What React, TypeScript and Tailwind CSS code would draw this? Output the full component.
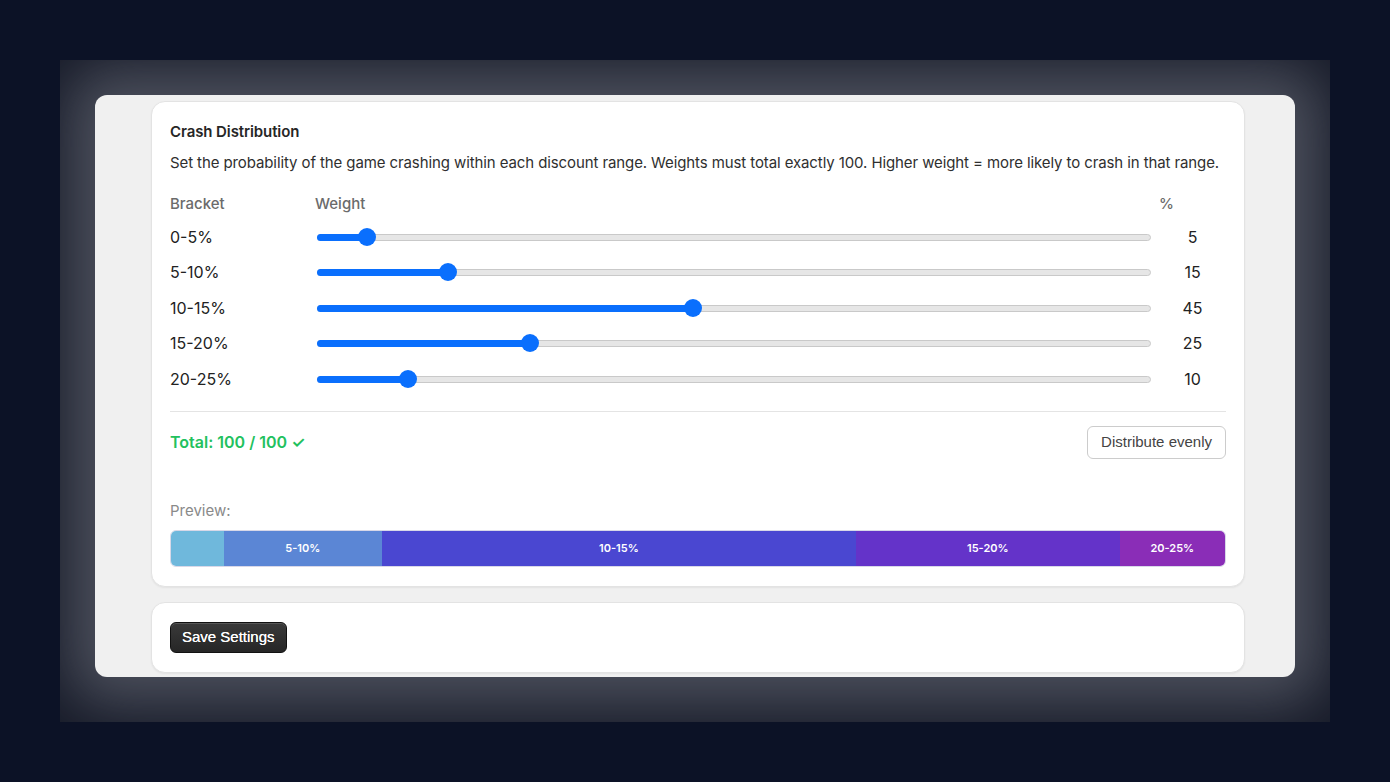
import React from "react";

const brackets = [
  { label: "0-5%", value: 5, color: "#6fb8dc" },
  { label: "5-10%", value: 15, color: "#5b86d5" },
  { label: "10-15%", value: 45, color: "#4a47d1" },
  { label: "15-20%", value: 25, color: "#6433c9" },
  { label: "20-25%", value: 10, color: "#8a2db7" },
];

const Slider = ({ value }: { value: number }) => {
  return (
    <div className="relative ml-[2px] mr-[8px] h-[18px]">
      <div className="absolute left-0 right-0 top-[6px] h-[7px] rounded-full border border-[#c9c9c9] bg-[#e6e6e6]" />
      <div
        className="absolute left-0 top-[6px] h-[7px] rounded-full bg-[#0a6ffd]"
        style={{ width: `calc(9px + (100% - 18px) * ${value / 100})` }}
      />
      <div
        className="absolute top-0 h-[18px] w-[18px] rounded-full bg-[#0a6ffd]"
        style={{ left: `calc((100% - 18px) * ${value / 100})` }}
      />
    </div>
  );
};

export default function App() {
  const total = brackets.reduce((s, b) => s + b.value, 0);
  return (
    <div className="h-[782px] w-full bg-[#0c1226] p-[60px] font-['Inter',sans-serif]">
      <div className="h-[662px] w-[1270px] overflow-hidden bg-[#171b29] px-[35px] pt-[35px]">
        <div className="h-[582px] overflow-hidden rounded-[12px] bg-[#f0f0f0] pl-[56px] pr-[50px] pt-[6px] shadow-[0_0_60px_28px_rgba(120,124,134,0.55)]">
          <div className="rounded-[14px] border border-[#e3e3e3] bg-white px-[18px] pb-[19px] pt-[19px] shadow-[0_1px_2px_rgba(0,0,0,0.06)]">
            <h2 className="text-[15px] font-semibold leading-[22px] tracking-[-0.1px] text-[#262626]">
              Crash Distribution
            </h2>
            <p className="mt-[9px] whitespace-nowrap text-[15px] leading-[22px] tracking-[-0.1px] text-[#2f2f2f]">
              Set the probability of the game crashing within each discount range. Weights must total
              exactly 100. Higher weight = more likely to crash in that range.
            </p>
            <div className="mt-[19px] grid grid-cols-[145px_1fr_67px] text-[15px] font-medium leading-[22px] text-[#6b6b6b]">
              <div>Bracket</div>
              <div>Weight</div>
              <div>%</div>
            </div>
            <div className="mt-[4px]">
              {brackets.map((b) => (
                <div
                  key={b.label}
                  className="grid h-[35.5px] grid-cols-[145px_1fr_67px] items-center text-[16px] text-[#222222]"
                >
                  <div>{b.label}</div>
                  <Slider value={b.value} />
                  <div className="text-center">{b.value}</div>
                </div>
              ))}
            </div>
            <div className="mt-[14px] h-px bg-[#e4e4e4]" />
            <div className="mt-[14px] flex items-center justify-between">
              <div className="text-[16px] font-semibold text-[#22c15e]">
                Total: {total} / 100 ✓
              </div>
              <button className="h-[33px] rounded-[6px] border border-[#cccccc] bg-white px-[13px] font-['Liberation_Sans',Arial,sans-serif] text-[15px] text-[#444444]">
                Distribute evenly
              </button>
            </div>
            <div className="mt-[41px] text-[15px] leading-[22px] text-[#8a8a8a]">Preview:</div>
            <div className="mt-[8px] flex h-[37px] overflow-hidden rounded-[6px] border border-[#d8d8e8]">
              {brackets.map((b) => (
                <div
                  key={b.label}
                  className="flex items-center justify-center text-[11px] font-semibold text-white"
                  style={{ width: `${(b.value / total) * 100}%`, backgroundColor: b.color }}
                >
                  {b.value >= 10 ? b.label : ""}
                </div>
              ))}
            </div>
          </div>
          <div className="mt-[15px] rounded-[14px] border border-[#e3e3e3] bg-white px-[18px] py-[19px] shadow-[0_1px_2px_rgba(0,0,0,0.06)]">
            <button className="h-[31px] rounded-[6px] border border-[#111111] bg-gradient-to-b from-[#3a3a3a] to-[#262626] px-[11px] font-['Liberation_Sans',Arial,sans-serif] text-[15px] text-white shadow-[inset_0_1px_0_rgba(255,255,255,0.15)] [text-shadow:0_0_0.4px_#fff]">
              Save Settings
            </button>
          </div>
        </div>
      </div>
    </div>
  );
}
